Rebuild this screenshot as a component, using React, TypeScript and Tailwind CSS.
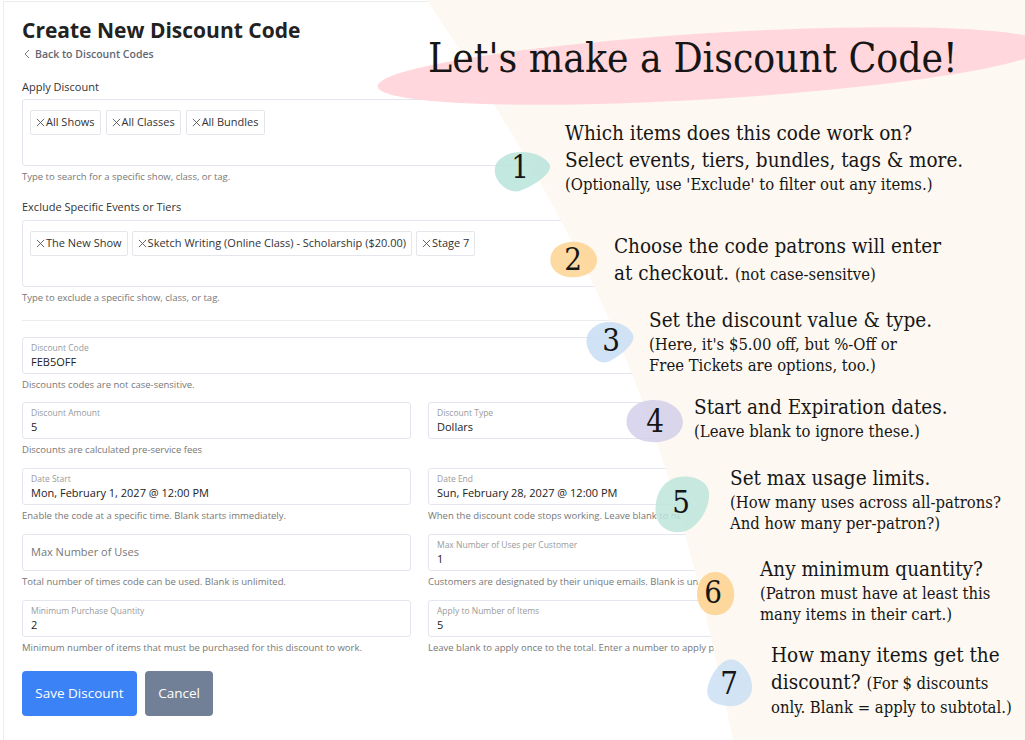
import type { ReactNode } from "react";

function XIcon() {
  return (
    <svg width="9" height="9" viewBox="0 0 10 10" className="shrink-0">
      <path d="M1 1L9 9M9 1L1 9" stroke="#555" strokeWidth="1" />
    </svg>
  );
}

function Chip({ label }: { label: string }) {
  return (
    <span className="flex h-[25px] items-center gap-[1px] whitespace-nowrap rounded-[2px] border border-[#e4e6eb] px-[5px] text-[11px] text-[#333]">
      <XIcon />
      {label}
    </span>
  );
}

function Field({
  label,
  value,
  placeholder,
}: {
  label?: string;
  value?: string;
  placeholder?: string;
}) {
  if (placeholder) {
    return (
      <div className="flex h-[37px] items-center rounded-[3px] border border-[#e4e6ef] px-[8px] text-[11px] text-[#777]">
        {placeholder}
      </div>
    );
  }
  return (
    <div className="h-[37px] rounded-[3px] border border-[#e4e6ef] px-[8px] pt-[4px]">
      <div className="text-[8.5px] leading-[12px] text-[#9a9a9a]">{label}</div>
      <div className="text-[11px] leading-[15px] text-[#222]">{value}</div>
    </div>
  );
}

function Help({ children }: { children: ReactNode }) {
  return (
    <p className="mt-[4px] whitespace-nowrap text-[9.5px] leading-[14px] text-[#777]">
      {children}
    </p>
  );
}

function Blob({ d, fill, className }: { d: string; fill: string; className: string }) {
  return (
    <svg viewBox="0 0 100 100" preserveAspectRatio="none" className={`absolute ${className}`}>
      <path d={d} fill={fill} fillOpacity="0.85" />
    </svg>
  );
}

const TRI = "M18,20 C35,2 80,5 95,35 C105,55 70,85 45,98 C25,105 2,75 3,50 C4,35 8,28 18,20 Z";
const EGG = "M50,2 C80,2 100,30 98,55 C96,85 70,100 45,98 C15,96 0,70 3,45 C6,18 25,2 50,2 Z";
const SQ = "M30,8 C55,-4 95,5 98,30 C101,55 80,90 55,97 C30,104 5,90 3,65 C1,40 10,18 30,8 Z";
const DROP = "M55,3 C80,5 100,40 98,62 C96,88 70,100 45,98 C18,96 0,85 3,65 C6,40 30,1 55,3 Z";

const big = "text-[20.5px] leading-[27px]";
const small = "text-[16.5px] leading-[21px]";
const num = "absolute w-[30px] text-center text-[31px] leading-[40px]";

export default function App() {
  return (
    <div className="relative h-[740px] w-[1025px] overflow-hidden bg-white font-['Open_Sans',sans-serif]">
      {/* Form */}
      <div className="ml-[3px] mt-[1px] h-[760px] w-[832px] border-l border-t border-[#ededed] px-[18px] pt-[13px]">
        <h1 className="text-[21px] font-bold leading-[30px] text-[#222]">Create New Discount Code</h1>
        <a className="mt-[1px] flex items-center gap-[5px] pl-[2px] text-[10.5px] font-semibold leading-[16px] text-[#5f6673]">
          <svg width="6" height="10" viewBox="0 0 6 10">
            <path d="M5 1L1 5L5 9" stroke="#777" strokeWidth="1" fill="none" />
          </svg>
          Back to Discount Codes
        </a>

        <label className="mt-[17px] block text-[11px] leading-[16px] text-[#333]">Apply Discount</label>
        <div className="mt-[4px] flex h-[67px] items-start gap-[5px] rounded-[3px] border border-[#e4e6ef] px-[7px] pt-[10px]">
          <Chip label="All Shows" />
          <Chip label="All Classes" />
          <Chip label="All Bundles" />
        </div>
        <Help>Type to search for a specific show, class, or tag.</Help>

        <label className="mt-[15px] block text-[11px] leading-[16px] text-[#333]">
          Exclude Specific Events or Tiers
        </label>
        <div className="mt-[5px] flex h-[67px] items-start gap-[4px] rounded-[3px] border border-[#e4e6ef] px-[7px] pt-[10px]">
          <Chip label="The New Show" />
          <Chip label="Sketch Writing (Online Class) - Scholarship ($20.00)" />
          <Chip label="Stage 7" />
        </div>
        <Help>Type to exclude a specific show, class, or tag.</Help>

        <hr className="mt-[15px] border-[#ececf0]" />

        <div className="mt-[16px]">
          <Field label="Discount Code" value="FEB5OFF" />
          <Help>Discounts codes are not case-sensitive.</Help>
        </div>

        <div className="mt-[10px] grid grid-cols-2 gap-x-[17px] gap-y-[11px]">
          <div>
            <Field label="Discount Amount" value="5" />
            <Help>Discounts are calculated pre-service fees</Help>
          </div>
          <div>
            <Field label="Discount Type" value="Dollars" />
          </div>
          <div>
            <Field label="Date Start" value="Mon, February 1, 2027 @ 12:00 PM" />
            <Help>Enable the code at a specific time. Blank starts immediately.</Help>
          </div>
          <div>
            <Field label="Date End" value="Sun, February 28, 2027 @ 12:00 PM" />
            <Help>When the discount code stops working. Leave blank to never expire.</Help>
          </div>
          <div>
            <Field placeholder="Max Number of Uses" />
            <Help>Total number of times code can be used. Blank is unlimited.</Help>
          </div>
          <div>
            <Field label="Max Number of Uses per Customer" value="1" />
            <Help>Customers are designated by their unique emails. Blank is unlimited.</Help>
          </div>
          <div>
            <Field label="Minimum Purchase Quantity" value="2" />
            <Help>Minimum number of items that must be purchased for this discount to work.</Help>
          </div>
          <div>
            <Field label="Apply to Number of Items" value="5" />
            <Help>Leave blank to apply once to the total. Enter a number to apply per item.</Help>
          </div>
        </div>

        <div className="mt-[16px] flex gap-[8px]">
          <button className="h-[45px] w-[115px] rounded-[4px] bg-[#3b82f6] text-[13.5px] text-white">
            Save Discount
          </button>
          <button className="h-[45px] w-[68px] rounded-[4px] bg-[#718096] text-[13.5px] text-white">
            Cancel
          </button>
        </div>
      </div>

      {/* Annotation overlay */}
      <div className="pointer-events-none absolute inset-0 font-['DejaVu_Serif_Condensed','DejaVu_Serif',serif] font-stretch-condensed text-[#161616]">
        <svg viewBox="0 0 1025 740" className="absolute inset-0 h-[740px] w-[1025px]">
          <path d="M427,0 C599,260 667,410 733,740 L1025,740 L1025,0 Z" fill="#fdf8f1" />
          <ellipse cx="712" cy="66" rx="335" ry="33" fill="#ffd7dc" transform="rotate(-3.5 712 66)" />
        </svg>

        <div className="absolute left-[428px] top-[31px] whitespace-nowrap text-[40.5px] leading-[54px]">
          Let's make a Discount Code!
        </div>

        <Blob d={TRI} fill="#b9e4da" className="left-[493px] top-[148px] h-[44px] w-[59px]" />
        <Blob d={EGG} fill="#fdd390" className="left-[549px] top-[241px] h-[37px] w-[49px]" />
        <Blob d={TRI} fill="#c8def5" className="left-[585px] top-[318px] h-[45px] w-[50px]" />
        <Blob d={EGG} fill="#d2cfea" className="left-[625px] top-[399px] h-[44px] w-[59px]" />
        <Blob d={SQ} fill="#bde5da" className="left-[654px] top-[475px] h-[58px] w-[56px]" />
        <Blob d={EGG} fill="#fdd18d" className="left-[696px] top-[571px] h-[45px] w-[39px]" />
        <Blob d={DROP} fill="#cadff3" className="left-[706px] top-[658px] h-[49px] w-[47px]" />

        <div className={`${num} left-[505px] top-[147px]`}>1</div>
        <div className={`${num} left-[558px] top-[239px]`}>2</div>
        <div className={`${num} left-[596px] top-[320px]`}>3</div>
        <div className={`${num} left-[640px] top-[401px]`}>4</div>
        <div className={`${num} left-[666px] top-[482px]`}>5</div>
        <div className={`${num} left-[698px] top-[572px]`}>6</div>
        <div className={`${num} left-[714px] top-[663px]`}>7</div>

        <div className="absolute left-[565px] top-[120px] whitespace-nowrap">
          <div className={big}>Which items does this code work on?</div>
          <div className={big}>Select events, tiers, bundles, tags &amp; more.</div>
          <div className={small}>(Optionally, use 'Exclude' to filter out any items.)</div>
        </div>

        <div className="absolute left-[614px] top-[233px] whitespace-nowrap">
          <div className={big}>Choose the code patrons will enter</div>
          <div className={big}>
            at checkout. <span className="text-[16.5px]">(not case-sensitve)</span>
          </div>
        </div>

        <div className="absolute left-[649px] top-[307px] whitespace-nowrap">
          <div className={big}>Set the discount value &amp; type.</div>
          <div className={small}>(Here, it's $5.00 off, but %-Off or</div>
          <div className={small}>Free Tickets are options, too.)</div>
        </div>

        <div className="absolute left-[694px] top-[394px] whitespace-nowrap">
          <div className={big}>Start and Expiration dates.</div>
          <div className={small}>(Leave blank to ignore these.)</div>
        </div>

        <div className="absolute left-[730px] top-[465px] whitespace-nowrap">
          <div className={big}>Set max usage limits.</div>
          <div className={small}>(How many uses across all-patrons?</div>
          <div className={small}>And how many per-patron?)</div>
        </div>

        <div className="absolute left-[760px] top-[556px] whitespace-nowrap">
          <div className={big}>Any minimum quantity?</div>
          <div className={small}>(Patron must have at least this</div>
          <div className={small}>many items in their cart.)</div>
        </div>

        <div className="absolute left-[771px] top-[642px] whitespace-nowrap">
          <div className={big}>How many items get the</div>
          <div className={big}>
            discount? <span className="text-[16.5px]">(For $ discounts</span>
          </div>
          <div className={small}>only. Blank = apply to subtotal.)</div>
        </div>
      </div>
    </div>
  );
}
